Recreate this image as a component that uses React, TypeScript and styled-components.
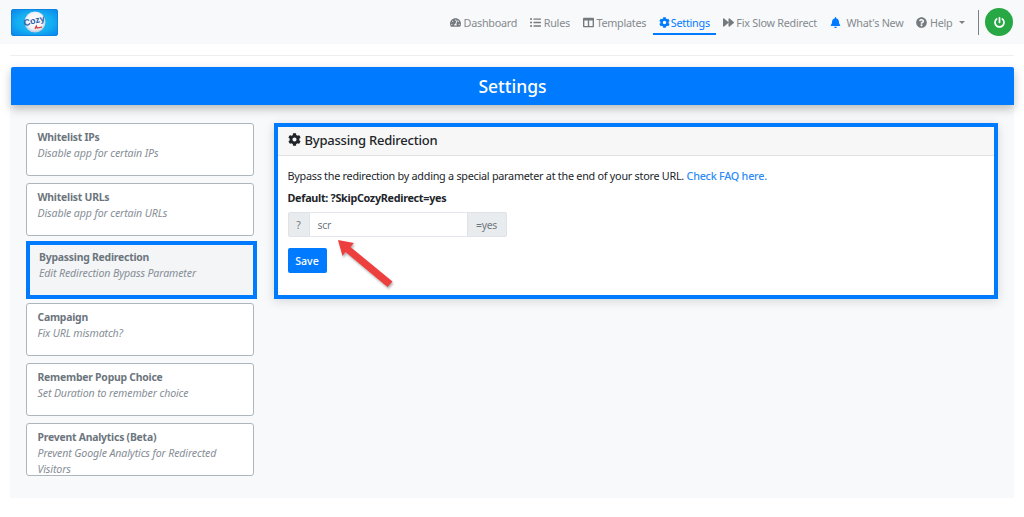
import React from "react";
import styled, { createGlobalStyle } from "styled-components";
import { FaTachometerAlt, FaListUl, FaColumns, FaCog, FaForward, FaBell, FaQuestionCircle, FaPowerOff } from "react-icons/fa";

const Global = createGlobalStyle`
  html, body { margin: 0; padding: 0; background: #fff; }
  body { font-family: "Noto Sans", "Open Sans", sans-serif; color: #212529; width: 1024px; height: 517px; overflow: hidden; }
  * { box-sizing: border-box; }
`;

const TopBar = styled.header`
  height: 44px;
  background: #f8f9fa;
  display: flex;
  align-items: center;
  padding: 0 11px;
`;
const LogoBox = styled.div`
  width: 47px;
  height: 27px;
  flex: none;
  border-radius: 2px;
  background: radial-gradient(ellipse at center, #1fc3f6 0%, #14aef2 55%, #0a86ea 100%);
  border: 1px solid #0b84e4;
  display: flex;
  align-items: center;
  justify-content: center;
`;
const Nav = styled.nav`
  margin-left: auto;
  display: flex;
  align-items: center;
  height: 44px;
`;
const NavLink = styled.a<{ $active?: boolean }>`
  display: flex;
  align-items: center;
  gap: ${(p) => (p.$active ? "0.5px" : "2.5px")};
  height: 26px;
  padding: 2px 6px 0;
  margin-right: 1px;
  font-size: 10.8px;
  letter-spacing: -0.25px;
  color: ${(p) => (p.$active ? "#007bff" : "#858a8f")};
  border-bottom: 2px solid ${(p) => (p.$active ? "#007bff" : "transparent")};
  white-space: nowrap;
  svg { flex: none; font-size: 11px; color: ${(p) => (p.$active ? "#007bff" : "#757a7f")}; }
`;
const BlueIcon = styled.span`
  display: flex;
  margin-right: 3px;
  svg { color: #007bff; }
`;
const Caret = styled.span`
  width: 0;
  height: 0;
  margin-left: 4px;
  border-left: 3.5px solid transparent;
  border-right: 3.5px solid transparent;
  border-top: 3.5px solid #7b8085;
`;
const Divider = styled.span`
  width: 1px;
  height: 25px;
  margin: 0 6px 0 6px;
  background: #7b8085;
`;
const PowerButton = styled.button`
  width: 28px;
  height: 28px;
  border: 0;
  padding: 0;
  border-radius: 50%;
  background: #28a745;
  color: #fff;
  display: flex;
  align-items: center;
  justify-content: center;
  font-size: 11px;
`;
const Rule = styled.hr`
  border: 0;
  height: 1px;
  background: #edeef0;
  margin: 11px 10px 11px;
`;
const Banner = styled.h1`
  margin: 0 10px 0 11px;
  height: 38px;
  background: #007bff;
  color: #fff;
  border-radius: 2px 2px 0 0;
  box-shadow: 0 4px 10px rgba(0, 0, 0, 0.25);
  display: flex;
  align-items: center;
  justify-content: center;
  font-size: 17.5px;
  font-weight: 500;
  position: relative;
`;
const Body = styled.main`
  margin: 0 10px;
  height: 393px;
  background: #f8f9fa;
  padding: 18px 16px 0;
  display: flex;
  gap: 20px;
  align-items: flex-start;
`;
const Sidebar = styled.aside`
  width: 228px;
  flex: none;
  display: flex;
  flex-direction: column;
  gap: 7px;
`;
const Item = styled.div<{ $active?: boolean }>`
  height: ${(p) => (p.$active ? "58px" : "53px")};
  width: ${(p) => (p.$active ? "231px" : "228px")};
  margin: ${(p) => (p.$active ? "-2.4px 0 -2.4px" : "0")};
  background: ${(p) => (p.$active ? "#f4f5f7" : "#fff")};
  border: ${(p) => (p.$active ? "4px solid #007bff" : "1px solid #adb5bd")};
  border-radius: ${(p) => (p.$active ? "0" : "3px")};
  padding: ${(p) => (p.$active ? "4px 9px" : "5px 10.5px")};
  overflow: hidden;
  font-size: 10.6px;
  line-height: 16px;
`;
const ItemTitle = styled.div`
  font-weight: 700;
  font-size: 10.4px;
  letter-spacing: -0.22px;
  color: #6c757d;
`;
const ItemText = styled.div`
  font-style: italic;
  letter-spacing: -0.12px;
  color: #868e96;
`;
const Card = styled.section`
  position: relative;
  width: 725px;
  height: 176px;
  margin-top: -0.5px;
  background: #fff;
  border: 4px solid #007bff;
  box-shadow: 0 2px 10px rgba(0, 0, 0, 0.14);
`;
const CardHead = styled.div`
  height: 29.5px;
  padding: 0 9.5px 2px;
  background: #f7f7f7;
  border-bottom: 1px solid #e2e2e2;
  display: flex;
  align-items: center;
  gap: 4px;
  font-size: 13px;
  letter-spacing: -0.22px;
  font-weight: 500;
  svg { font-size: 13px; }
`;
const CardBody = styled.div`
  padding: 12px 9.5px 0;
  font-size: 10.8px;
  letter-spacing: -0.25px;
`;
const Lead = styled.p`
  margin: 0;
  line-height: 16px;
`;
const Link = styled.a`
  color: #2b8cf7;
  font-weight: 500;
`;
const Default = styled.p`
  margin: 6px 0 0;
  line-height: 16px;
  font-weight: 700;
  letter-spacing: -0.3px;
`;
const InputGroup = styled.div`
  display: flex;
  width: 219px;
  height: 25px;
  margin-top: 6px;
  font-size: 10.4px;
  color: #6f777e;
`;
const Addon = styled.span<{ $side: "left" | "right" }>`
  background: #e9ecef;
  border: 1px solid #dfe2e6;
  border-radius: ${(p) => (p.$side === "left" ? "2px 0 0 2px" : "0 2px 2px 0")};
  display: flex;
  align-items: center;
  justify-content: center;
  flex: none;
  width: ${(p) => (p.$side === "left" ? "22px" : "40px")};
`;
const Field = styled.div`
  flex: 1;
  border-top: 1px solid #e3e6ea;
  border-bottom: 1px solid #e3e6ea;
  background: #fff;
  display: flex;
  align-items: center;
  padding-left: 8px;
`;
const SaveButton = styled.button`
  display: block;
  margin-top: 11px;
  width: 39px;
  height: 25px;
  padding: 0;
  border: 0;
  border-radius: 2px;
  background: #007bff;
  color: #fff;
  font: 500 10.6px "Noto Sans", sans-serif;
`;
const ArrowSvg = styled.svg`
  position: absolute;
  left: 59px;
  top: 113.5px;
  width: 60px;
  height: 54px;
  overflow: visible;
`;

const items = [
  { t: "Whitelist IPs", d: "Disable app for certain IPs" },
  { t: "Whitelist URLs", d: "Disable app for certain URLs" },
  { t: "Bypassing Redirection", d: "Edit Redirection Bypass Parameter", active: true },
  { t: "Campaign", d: "Fix URL mismatch?" },
  { t: "Remember Popup Choice", d: "Set Duration to remember choice" },
  { t: "Prevent Analytics (Beta)", d: "Prevent Google Analytics for Redirected Visitors" },
];

export default function App() {
  return (
    <>
      <Global />
      <TopBar>
        <LogoBox>
          <svg width="24" height="24" viewBox="0 0 24 24">
            <defs>
              <radialGradient id="ball" cx="50%" cy="45%" r="55%">
                <stop offset="0%" stopColor="#ffffff" />
                <stop offset="70%" stopColor="#f2f4f8" />
                <stop offset="100%" stopColor="#bcc6da" />
              </radialGradient>
            </defs>
            <circle cx="12" cy="12" r="10.5" fill="url(#ball)" />
            <text x="11.5" y="13.5" textAnchor="middle" fontFamily="Liberation Sans, sans-serif" fontWeight="700" fontSize="9" fill="#2a5ba8" transform="rotate(-14 12 12)">Cozy</text>
            <path d="M12 19l1.3-3 .8 2 5-1" fill="none" stroke="#d8322c" strokeWidth="1.1" />
          </svg>
        </LogoBox>
        <Nav>
          <NavLink><FaTachometerAlt />Dashboard</NavLink>
          <NavLink><FaListUl />Rules</NavLink>
          <NavLink><FaColumns />Templates</NavLink>
          <NavLink $active><FaCog />Settings</NavLink>
          <NavLink><FaForward />Fix Slow Redirect</NavLink>
          <NavLink><BlueIcon><FaBell /></BlueIcon>What's New</NavLink>
          <NavLink><FaQuestionCircle />Help<Caret /></NavLink>
          <Divider />
          <PowerButton aria-label="Power"><FaPowerOff /></PowerButton>
        </Nav>
      </TopBar>
      <Rule />
      <Banner>Settings</Banner>
      <Body>
        <Sidebar>
          {items.map((i) => (
            <Item key={i.t} $active={i.active}>
              <ItemTitle>{i.t}</ItemTitle>
              <ItemText>{i.d}</ItemText>
            </Item>
          ))}
        </Sidebar>
        <Card>
          <CardHead><FaCog />Bypassing Redirection</CardHead>
          <CardBody>
            <Lead>Bypass the redirection by adding a special parameter at the end of your store URL. <Link>Check FAQ here.</Link></Lead>
            <Default>Default: ?SkipCozyRedirect=yes</Default>
            <InputGroup>
              <Addon $side="left">?</Addon>
              <Field>scr</Field>
              <Addon $side="right">=yes</Addon>
            </InputGroup>
            <SaveButton>Save</SaveButton>
          </CardBody>
          <ArrowSvg viewBox="0 0 60 54">
            <path d="M1 0 L17 3 L13.5 7 L55.5 41.5 L50.5 47 L8.5 12 L5.5 16 Z" fill="#ee3f3f" style={{ filter: "drop-shadow(1px 2px 1px rgba(0,0,0,.3))" }} />
          </ArrowSvg>
        </Card>
      </Body>
    </>
  );
}
